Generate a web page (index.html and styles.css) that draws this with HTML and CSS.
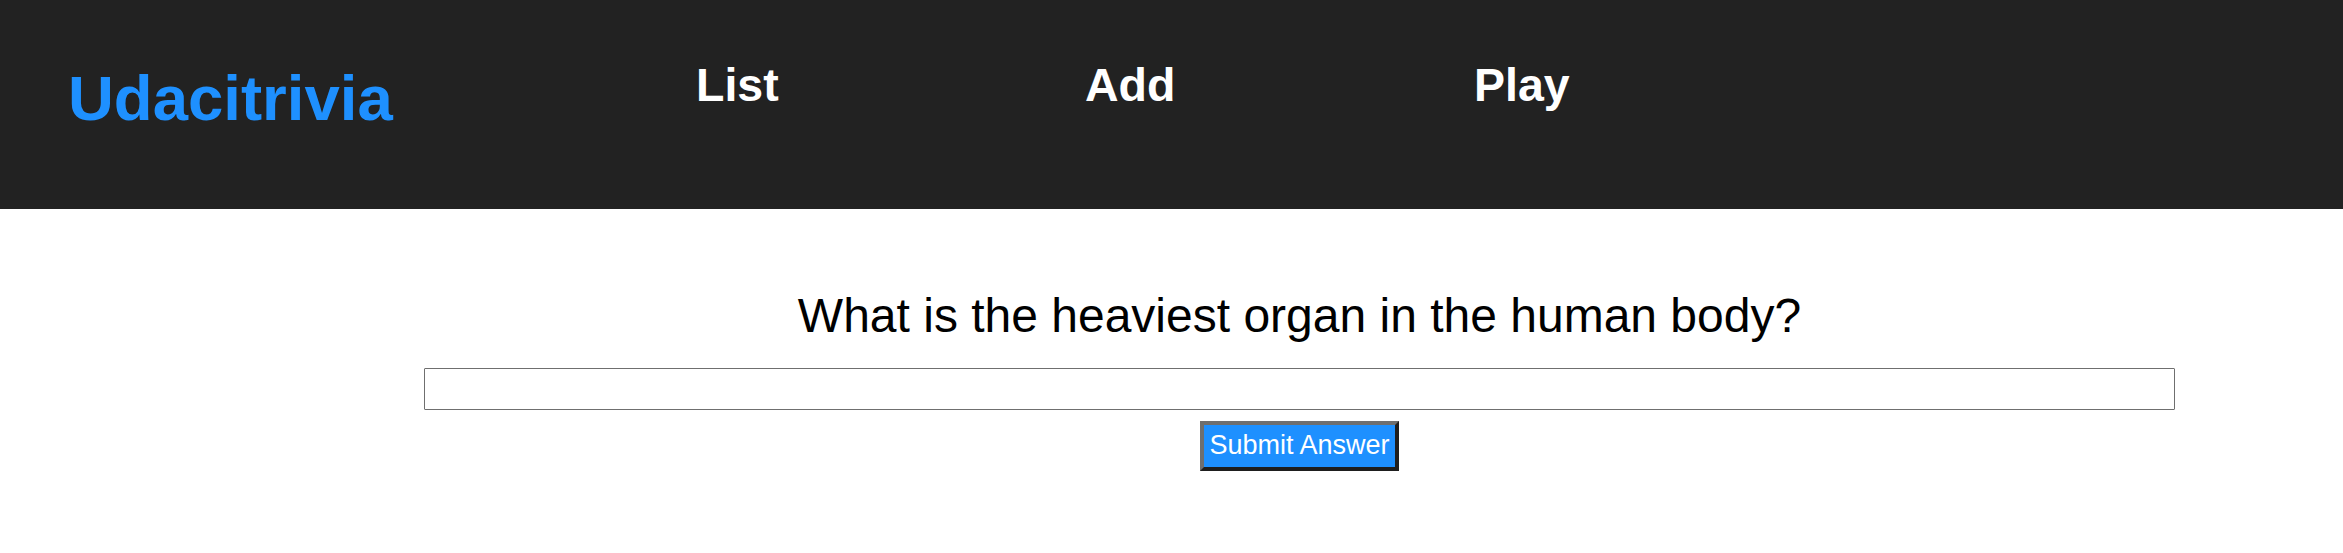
FILE: index.html
```html
<!DOCTYPE html>
<html lang="en">
<head>
<meta charset="utf-8">
<title>Udacitrivia</title>
<link rel="stylesheet" href="styles.css">
</head>
<body>
<header class="app-header">
  <h1 class="logo">Udacitrivia</h1>
  <nav class="nav">
    <h2 class="nav-item">List</h2>
    <h2 class="nav-item">Add</h2>
    <h2 class="nav-item">Play</h2>
  </nav>
</header>
<main class="quiz-play">
  <div class="quiz-question">What is the heaviest organ in the human body?</div>
  <form class="quiz-form">
    <input class="answer-input" type="text">
    <button class="submit-btn" type="button">Submit Answer</button>
  </form>
</main>
</body>
</html>
```
FILE: styles.css
```css
html, body {
  margin: 0;
  padding: 0;
  background: #ffffff;
  font-family: "Liberation Sans", Arial, sans-serif;
}

.app-header {
  display: flex;
  align-items: flex-start;
  height: 209px;
  padding-left: 68px;
  background: #222222;
  box-sizing: border-box;
}

.logo {
  margin: 61.5px 0 0 0;
  width: 628px;
  font-size: 63.5px;
  font-weight: bold;
  line-height: normal;
  color: #1e90ff;
}

.nav {
  display: flex;
}

.nav-item {
  margin: 57.5px 0 0 0;
  width: 389px;
  font-size: 46.5px;
  font-weight: bold;
  line-height: normal;
  color: #ffffff;
}

.quiz-play {
  display: flex;
  flex-direction: column;
  align-items: center;
  width: 1751px;
  margin-left: 424px;
  padding-top: 79px;
}

.quiz-question {
  font-size: 48px;
  line-height: normal;
  color: #000000;
  text-align: center;
}

.quiz-form {
  display: flex;
  flex-direction: column;
  align-items: center;
  width: 100%;
  margin-top: 25px;
}

.answer-input {
  width: 100%;
  height: 42px;
  margin: 0;
  box-sizing: border-box;
  border: 1px solid #6f6f6f;
  border-radius: 1px;
  background: #ffffff;
  font-size: 16px;
  padding: 0 4px;
}

.submit-btn {
  margin-top: 11px;
  padding: 5px 5px 6px;
  border-width: 4px;
  border-style: solid;
  border-color: #6f6f6f #1e1e1e #1e1e1e #6f6f6f;
  background: #1e90ff;
  color: #ffffff;
  font-family: "Liberation Sans", Arial, sans-serif;
  font-size: 27px;
  line-height: 31px;
  cursor: pointer;
}
```
